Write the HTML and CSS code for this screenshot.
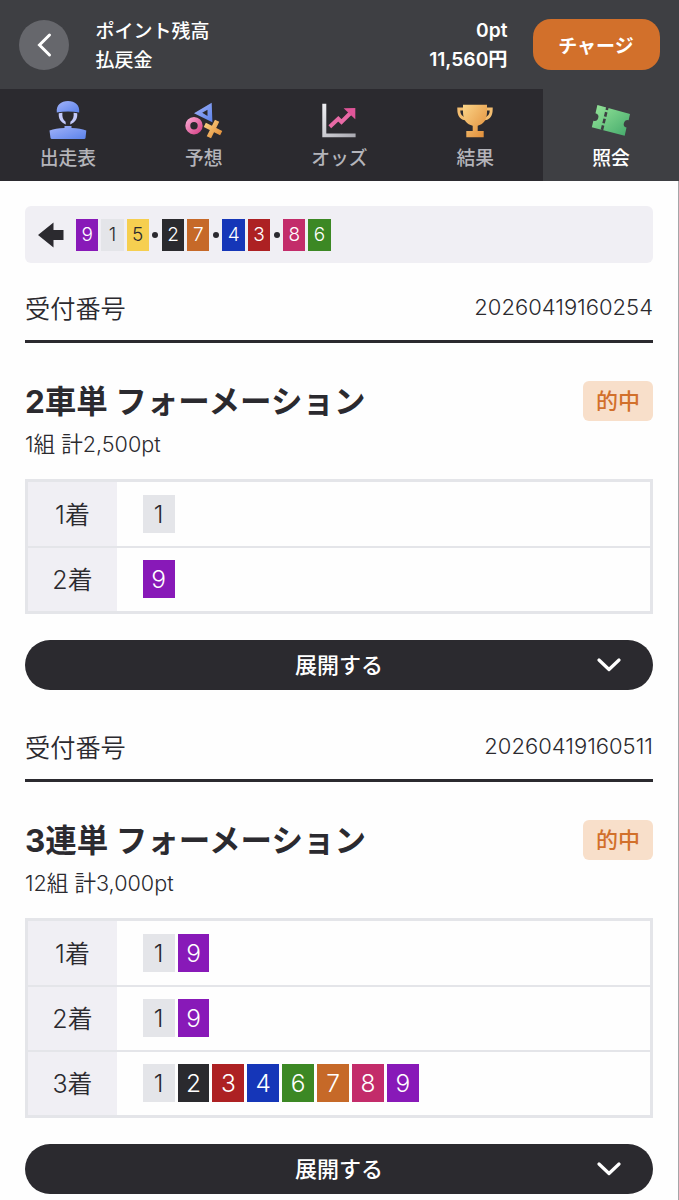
FILE: index.html
```html
<!DOCTYPE html>
<html lang="ja">
<head>
    <meta charset="utf-8">
    <title>照会</title>
    <link rel="stylesheet" href="styles.css">
</head>
<body>
    <header class="header">
        <button class="back-btn" aria-label="戻る">
            <svg width="50" height="50" viewBox="0 0 50 50"><path d="M30.5 15 L20.5 25 L30.5 35" fill="none" stroke="#fff" stroke-width="3" stroke-linecap="round"/></svg>
        </button>
        <div class="balance-labels">
            <div>ポイント残高</div>
            <div>払戻金</div>
        </div>
        <div class="balance-values">
            <div>0pt</div>
            <div>11,560円</div>
        </div>
        <button class="charge-btn">チャージ</button>
    </header>

    <nav class="tabs">
        <a class="tab">
            <svg class="tab-icon" viewBox="0 0 40 40">
                <defs><linearGradient id="blue" x1="0" y1="0" x2="1" y2="1"><stop offset="0" stop-color="#a3b4fa"/><stop offset="1" stop-color="#5b82ea"/></linearGradient></defs>
                <path d="M8.8 12.5 C8 5 13 1 20 1 C27 1 32 5 31.2 12.5 C24 11 16 11 8.8 12.5 Z" fill="url(#blue)"/>
                <path d="M10.8 13.2 L14.4 12.8 C14 17 14.8 19.5 17.6 21.8 L17.8 24.4 C12.5 22.5 10.2 18 10.8 13.2 Z M29.2 13.2 L25.6 12.8 C26 17 25.2 19.5 22.4 21.8 L22.2 24.4 C27.5 22.5 29.8 18 29.2 13.2 Z" fill="#c3cafb"/>
                <path d="M16.5 26 H23.5 V28 C30 28 34 29 38.3 30.5 L37.5 38 Q37.3 39 36 39 H4 Q2.7 39 2.5 38 L1.5 30.5 C6 29 10 28 16.5 28 Z" fill="url(#blue)"/>
            </svg>
            <span>出走表</span>
        </a>
        <a class="tab">
            <svg class="tab-icon" viewBox="0 0 40 40">
                <defs>
                    <linearGradient id="pink" x1="0" y1="0" x2="1" y2="1"><stop offset="0" stop-color="#f5a0cc"/><stop offset="1" stop-color="#d94a8c"/></linearGradient>
                    <linearGradient id="gold" x1="0" y1="0" x2="1" y2="1"><stop offset="0" stop-color="#fbd488"/><stop offset="1" stop-color="#e08a35"/></linearGradient>
                </defs>
                <path d="M10 13.3 L27.7 2.7 L28.4 22.3 Z M18.2 12.8 L23.5 15.9 V9.8 Z" fill="url(#blue)" fill-rule="evenodd"/>
                <circle cx="10" cy="25.7" r="6.2" fill="none" stroke="url(#pink)" stroke-width="5"/>
                <path d="M33.1 20.8 L24.9 37.2 M20.8 24.9 L37.2 33.1" stroke="url(#gold)" stroke-width="4.8"/>
            </svg>
            <span>予想</span>
        </a>
        <a class="tab">
            <svg class="tab-icon" viewBox="0 0 40 40">
                <defs><linearGradient id="silver" x1="0" y1="0" x2="1" y2="1"><stop offset="0" stop-color="#f0f0f4"/><stop offset="1" stop-color="#a8a8b0"/></linearGradient></defs>
                <path d="M3.3 3.7 H7.3 V33.5 H36.6 V37.3 H3.3 Z" fill="url(#silver)"/>
                <path d="M10.8 26.8 L19.3 18.8 L22.5 22 L32 12.5" fill="none" stroke="#e86aa6" stroke-width="4"/>
                <path d="M24.6 8.3 L36.3 8 V19.3 Z" fill="#e05599"/>
            </svg>
            <span>オッズ</span>
        </a>
        <a class="tab">
            <svg class="tab-icon" viewBox="0 0 40 40">
                <path d="M9 9 H3.7 C3.7 15 6 19 12 19 M31 9 H36.3 C36.3 15 34 19 28 19" fill="none" stroke="#f3bd70" stroke-width="2.8"/>
                <path d="M8 4.7 H32 V12 C32 20 28 24.5 22.7 25.7 V31 H28.7 V37.3 H11.3 V31 H17.7 V25.7 C12 24.5 8 20 8 12 Z" fill="url(#gold)"/>
            </svg>
            <span>結果</span>
        </a>
        <a class="tab active">
            <svg class="tab-icon" viewBox="0 0 40 40">
                <defs><linearGradient id="green" x1="0" y1="0" x2="1" y2="1"><stop offset="0" stop-color="#97e69a"/><stop offset="1" stop-color="#43a96b"/></linearGradient></defs>
                <path d="M6.4 5 L39 14 L37.6 20.3 A3.4 3.4 0 0 0 35.5 27.6 L33.7 35.7 L0.8 27.2 L2.4 20.8 A3.4 3.4 0 0 0 4.5 13.2 Z" fill="url(#green)"/>
                <path d="M16.6 6.5 L10.7 31" stroke="#3e3f43" stroke-width="2.6" stroke-dasharray="4.6 2.2" stroke-dashoffset="1"/>
            </svg>
            <span>照会</span>
        </a>
    </nav>

    <main class="content">
        <div class="lineup">
            <svg class="lineup-arrow" viewBox="0 0 26 26"><path d="M0 13 L15.5 0.5 V8 H25.5 V18 H15.5 V25.5 Z" fill="#2b2a2f"/></svg>
            <div class="line-group"><span class="num n9">9</span><span class="num n1">1</span><span class="num n5">5</span></div>
            <i class="dot"></i>
            <div class="line-group"><span class="num n2">2</span><span class="num n7">7</span></div>
            <i class="dot"></i>
            <div class="line-group"><span class="num n4">4</span><span class="num n3">3</span></div>
            <i class="dot"></i>
            <div class="line-group"><span class="num n8">8</span><span class="num n6">6</span></div>
        </div>

        <section class="ticket">
            <div class="receipt">
                <span>受付番号</span>
                <span class="receipt-no">20260419160254</span>
            </div>
            <div class="ticket-head">
                <h2>2車単 フォーメーション</h2>
                <span class="hit">的中</span>
            </div>
            <p class="summary">1組 計2,500pt</p>
            <div class="bets">
                <div class="bet-row">
                    <div class="place">1着</div>
                    <div class="picks"><span class="num n1">1</span></div>
                </div>
                <div class="bet-row">
                    <div class="place">2着</div>
                    <div class="picks"><span class="num n9">9</span></div>
                </div>
            </div>
            <button class="expand-btn">
                <span>展開する</span>
                <svg class="chevron" viewBox="0 0 24 14"><path d="M2 2 L12 11.5 L22 2" fill="none" stroke="#fff" stroke-width="3.2" stroke-linecap="round" stroke-linejoin="round"/></svg>
            </button>
        </section>

        <section class="ticket">
            <div class="receipt">
                <span>受付番号</span>
                <span class="receipt-no">20260419160511</span>
            </div>
            <div class="ticket-head">
                <h2>3連単 フォーメーション</h2>
                <span class="hit">的中</span>
            </div>
            <p class="summary">12組 計3,000pt</p>
            <div class="bets">
                <div class="bet-row">
                    <div class="place">1着</div>
                    <div class="picks"><span class="num n1">1</span><span class="num n9">9</span></div>
                </div>
                <div class="bet-row">
                    <div class="place">2着</div>
                    <div class="picks"><span class="num n1">1</span><span class="num n9">9</span></div>
                </div>
                <div class="bet-row">
                    <div class="place">3着</div>
                    <div class="picks"><span class="num n1">1</span><span class="num n2">2</span><span class="num n3">3</span><span class="num n4">4</span><span class="num n6">6</span><span class="num n7">7</span><span class="num n8">8</span><span class="num n9">9</span></div>
                </div>
            </div>
            <button class="expand-btn">
                <span>展開する</span>
                <svg class="chevron" viewBox="0 0 24 14"><path d="M2 2 L12 11.5 L22 2" fill="none" stroke="#fff" stroke-width="3.2" stroke-linecap="round" stroke-linejoin="round"/></svg>
            </button>
        </section>
    </main>
</body>
</html>
```

FILE: styles.css
```css
* {
    box-sizing: border-box;
}

body {
    margin: 0;
    height: 1200px;
    overflow: hidden;
    background-color: #fefefe;
    color: #2b2a2f;
    font-family: Inter, "Noto Sans CJK JP", sans-serif;
    font-weight: 350;
}

button {
    border: none;
    padding: 0;
    font-family: inherit;
    color: white;
    cursor: pointer;
}

.header {
    display: flex;
    align-items: center;
    height: 89px;
    padding: 0 19.5px 0 19px;
    background-color: #3e3f43;
    color: white;
    font-size: 19px;
    font-weight: 500;
    line-height: 29px;
}

.back-btn {
    width: 50px;
    height: 50px;
    border-radius: 50%;
    background-color: #66676c;
}

.back-btn svg {
    display: block;
}

.balance-labels {
    margin-left: 26.5px;
    padding-top: 2px;
}

.balance-values {
    margin-left: auto;
    padding-top: 1px;
    text-align: right;
    font-size: 19.2px;
    font-weight: 600;
}

.charge-btn {
    width: 127px;
    height: 51px;
    margin-left: 25px;
    border-radius: 18px;
    background-color: #d2702b;
    font-size: 19px;
    font-weight: 700;
}

.tabs {
    display: grid;
    grid-template-columns: repeat(5, 1fr);
    height: 92px;
    background-color: #2b2a2f;
}

.tab {
    display: flex;
    flex-direction: column;
    align-items: center;
    padding-top: 11px;
    color: #b4b4ba;
    font-size: 18.8px;
    font-weight: 500;
    line-height: 37px;
}

.tab.active {
    background-color: #3e3f43;
    color: white;
}

.tab-icon {
    width: 40px;
    height: 40px;
}

.content {
    height: 1019px;
    padding: 25px 25px 0;
    border-right: 1px solid #a5a5a8;
}

.lineup {
    display: flex;
    align-items: center;
    height: 57px;
    padding-left: 13px;
    border-radius: 6px;
    background-color: #f0eff4;
}

.lineup-arrow {
    width: 26px;
    height: 26px;
    margin-right: 12px;
}

.line-group {
    display: flex;
    gap: 3px;
}

.dot {
    width: 6px;
    height: 6px;
    margin: 0 3.5px;
    border-radius: 50%;
    background-color: #2b2a2f;
}

.num {
    display: flex;
    align-items: center;
    justify-content: center;
    width: 22.3px;
    height: 32px;
    color: white;
    font-size: 19px;
}

.n1 { background-color: #e4e5e9; color: #2b2a2f; }
.n2 { background-color: #2a2a2e; }
.n3 { background-color: #ad2123; }
.n4 { background-color: #1536b8; }
.n5 { background-color: #f6cf50; color: #2b2a2f; }
.n6 { background-color: #3c8824; }
.n7 { background-color: #c66928; }
.n8 { background-color: #c32c6a; }
.n9 { background-color: #8819b8; }

.receipt {
    display: flex;
    align-items: center;
    justify-content: space-between;
    height: 80px;
    padding-top: 10px;
    border-bottom: 3px solid #2b2a2f;
    font-size: 25.2px;
}

.receipt-no {
    font-size: 22px;
}

.ticket-head {
    display: flex;
    align-items: center;
    justify-content: space-between;
    margin-top: 38px;
    height: 40px;
}

h2 {
    margin: 0;
    padding-top: 2px;
    font-size: 31.5px;
    font-weight: 700;
    line-height: 40px;
}

.hit {
    width: 70px;
    height: 40px;
    border-radius: 6px;
    background-color: #f8dfca;
    color: #d2702b;
    font-size: 22px;
    font-weight: 500;
    line-height: 40px;
    text-align: center;
}

.summary {
    margin: 8px 0 20px;
    font-size: 21.6px;
    line-height: 30px;
}

.bets {
    border: 3px solid #e4e5e9;
}

.bet-row {
    display: flex;
    height: 65px;
}

.bet-row + .bet-row {
    border-top: 2px solid #e4e5e9;
}

.bet-row:first-child {
    height: 63.5px;
}

.place {
    display: flex;
    align-items: center;
    justify-content: center;
    width: 89px;
    padding-bottom: 2px;
    background-color: #f0eff4;
    font-size: 25px;
}

.picks {
    display: flex;
    align-items: center;
    gap: 3px;
    padding-left: 25.7px;
}

.picks .num {
    width: 31.9px;
    height: 38px;
    font-size: 24.5px;
}

.expand-btn {
    position: relative;
    display: block;
    width: 100%;
    height: 50.5px;
    margin-top: 26px;
    padding-bottom: 3px;
    border-radius: 25px;
    background-color: #2b2a2f;
    font-size: 22px;
    font-weight: 500;
}

.ticket + .ticket {
    margin-top: 12px;
}

.chevron {
    position: absolute;
    right: 32px;
    top: 18px;
    width: 24px;
    height: 14px;
}
```
